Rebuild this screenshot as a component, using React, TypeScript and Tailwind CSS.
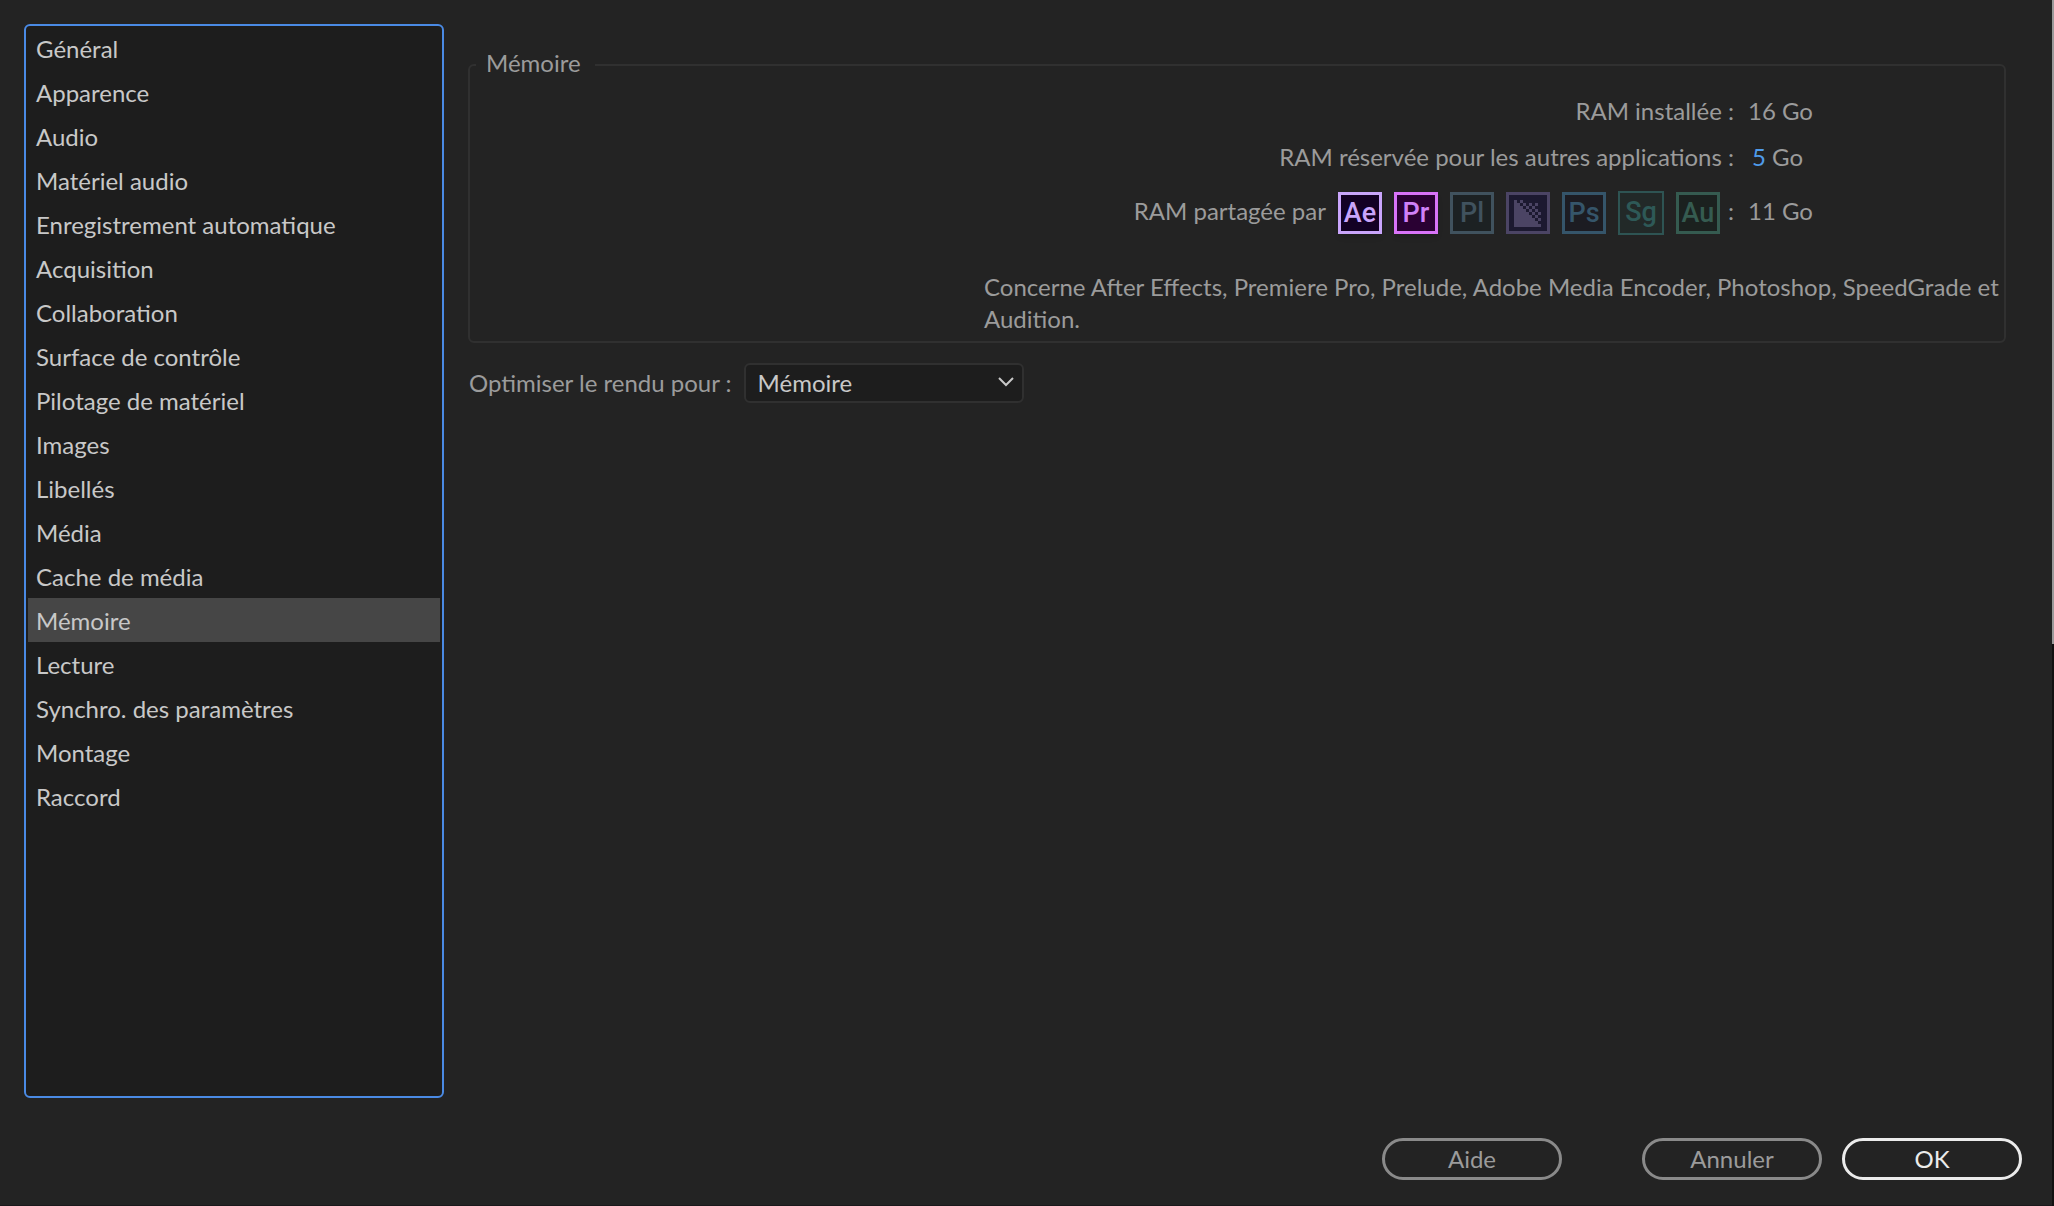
import { useState } from "react";

const categories = [
  "Général",
  "Apparence",
  "Audio",
  "Matériel audio",
  "Enregistrement automatique",
  "Acquisition",
  "Collaboration",
  "Surface de contrôle",
  "Pilotage de matériel",
  "Images",
  "Libellés",
  "Média",
  "Cache de média",
  "Mémoire",
  "Lecture",
  "Synchro. des paramètres",
  "Montage",
  "Raccord",
];

const badge =
  "flex h-[42px] w-11 items-center justify-center border-3 font-[Roboto] text-[27px] leading-none font-medium";

const dots = [
  [2, 0], [3, 1], [5, 1], [7, 1], [4, 2], [6, 2], [5, 3], [7, 3],
  [6, 4], [8, 4], [7, 5], [8, 6],
];

function EncoderIcon() {
  return (
    <svg viewBox="0 0 27 27" className="size-[27px]" fill="#4b4464" role="img" aria-label="Adobe Media Encoder" shapeRendering="crispEdges">
      <path d="M0 0H3V3H6V6H9V9H12V12H15V15H18V18H21V21H24V24H27V27H0z" />
      {dots.map(([x, y]) => (
        <rect key={`${x}-${y}`} x={x * 3} y={y * 3} width="3" height="3" />
      ))}
    </svg>
  );
}

export default function App() {
  const [selected, setSelected] = useState("Mémoire");
  return (
    <div className="flex min-h-screen bg-[#232323] font-[Lato,sans-serif] text-2xl leading-8 text-[#9b9b9b]">
      <div className="flex min-w-0 flex-1 flex-col pt-6">
        <div className="flex flex-1 gap-6 pr-[46px] pl-6">
          <nav aria-label="Catégories" className="w-[420px] shrink-0 rounded-md border-2 border-[#4a8ae4] bg-[#1d1d1d] px-0.5">
            <ul>
              {categories.map((name) => (
                <li key={name}>
                  <button
                    type="button"
                    aria-pressed={name === selected}
                    onClick={() => setSelected(name)}
                    className={`block h-11 w-full px-2 pt-0.5 text-left text-[#c8c8c8] ${name === selected ? "bg-[#464646]" : ""}`}
                  >
                    {name}
                  </button>
                </li>
              ))}
            </ul>
          </nav>

          <main className="min-w-0 flex-1 pt-[23px]">
            <fieldset className="rounded-md border-2 border-[#303030] pr-0.5 pl-1.5">
              <legend className="pr-3.5 pb-1 pl-2.5">Mémoire</legend>
              <div className="flex flex-col items-end">
                <dl className="flex w-full flex-col">
                  <div className="mt-3 flex justify-end gap-3.5">
                    <dt>RAM installée :</dt>
                    <dd className="w-[254px]">16 Go</dd>
                  </div>
                  <div className="mt-3.5 flex justify-end gap-3.5">
                    <dt>
                      <label htmlFor="reserved">RAM réservée pour les autres applications :</label>
                    </dt>
                    <dd className="flex w-[254px] gap-1.5 pl-1">
                      <input id="reserved" defaultValue="5" className="w-3.5 bg-transparent text-[#4f9bea] outline-none" />
                      Go
                    </dd>
                  </div>
                  <div className="mt-[13px] flex items-center justify-end gap-3.5">
                    <dt className="flex h-[50px] items-center gap-2">
                      <span className="mr-1">RAM partagée par</span>
                      <span className="flex items-center gap-3 pt-1">
                        <span className={`${badge} border-[#c9a5fb] bg-[#130124] text-[#c9a5fb] shadow-md`}>Ae</span>
                        <span className={`${badge} border-[#d873f8] bg-[#2a0133] text-[#d080f8] shadow-md`}>Pr</span>
                        <span className={`${badge} border-[#40525e] bg-[#1c2123] text-[#40525e]`}>Pl</span>
                        <span className={`${badge} border-[#4b4464] bg-[#1c1930]`}><EncoderIcon /></span>
                        <span className={`${badge} border-[#35556a] bg-[#1c1c22] text-[#35556a]`}>Ps</span>
                        <span className="flex h-11 w-[46px] items-center justify-center border-2 border-[#2e5453] bg-[#222928] pb-0.5 font-[Roboto] text-[27px] leading-none font-medium text-[#2e5957]">Sg</span>
                        <span className={`${badge} border-[#355b50] bg-[#1b211f] text-[#355b50]`}>Au</span>
                      </span>
                      <span>:</span>
                    </dt>
                    <dd className="w-[254px]">11 Go</dd>
                  </div>
                </dl>
                <p className="mt-[35px] mb-1.5 w-[1018px] max-w-full">
                  Concerne After Effects, Premiere Pro, Prelude, Adobe Media Encoder, Photoshop, SpeedGrade et Audition.
                </p>
              </div>
            </fieldset>

            <div className="mt-5 flex items-center gap-3 pl-px">
              <label htmlFor="optimize">Optimiser le rendu pour :</label>
              <div className="relative">
                <select
                  id="optimize"
                  defaultValue="Mémoire"
                  className="block h-10 w-[280px] appearance-none rounded-md border-2 border-[#303030] bg-[#1d1d1d] px-3 text-[#c8c8c8]"
                >
                  <option>Mémoire</option>
                  <option>Performances</option>
                </select>
                <svg viewBox="0 0 16 10" className="pointer-events-none absolute top-3.5 right-2.5 h-2.5 w-4" fill="none" stroke="#c8c8c8" strokeWidth="2" aria-hidden="true">
                  <path d="M1 1l7 7 7-7" />
                </svg>
              </div>
            </div>
          </main>
        </div>

        <footer className="flex justify-end pt-10 pr-[30px] pb-[25px]">
          <button type="button" className="mr-20 h-[42px] w-[180px] rounded-full border-3 border-[#8a8a8a]">Aide</button>
          <button type="button" className="mr-5 h-[42px] w-[180px] rounded-full border-3 border-[#8a8a8a]">Annuler</button>
          <button type="button" className="h-[42px] w-[180px] rounded-full border-3 border-[#ebebeb] text-[#ebebeb]">OK</button>
        </footer>
        <div className="h-px bg-[#1a181b]" />
      </div>
      <div className="flex w-0.5 flex-col bg-[#111111]">
        <div className="h-[644px] bg-[#9a9a9a]" />
      </div>
    </div>
  );
}
